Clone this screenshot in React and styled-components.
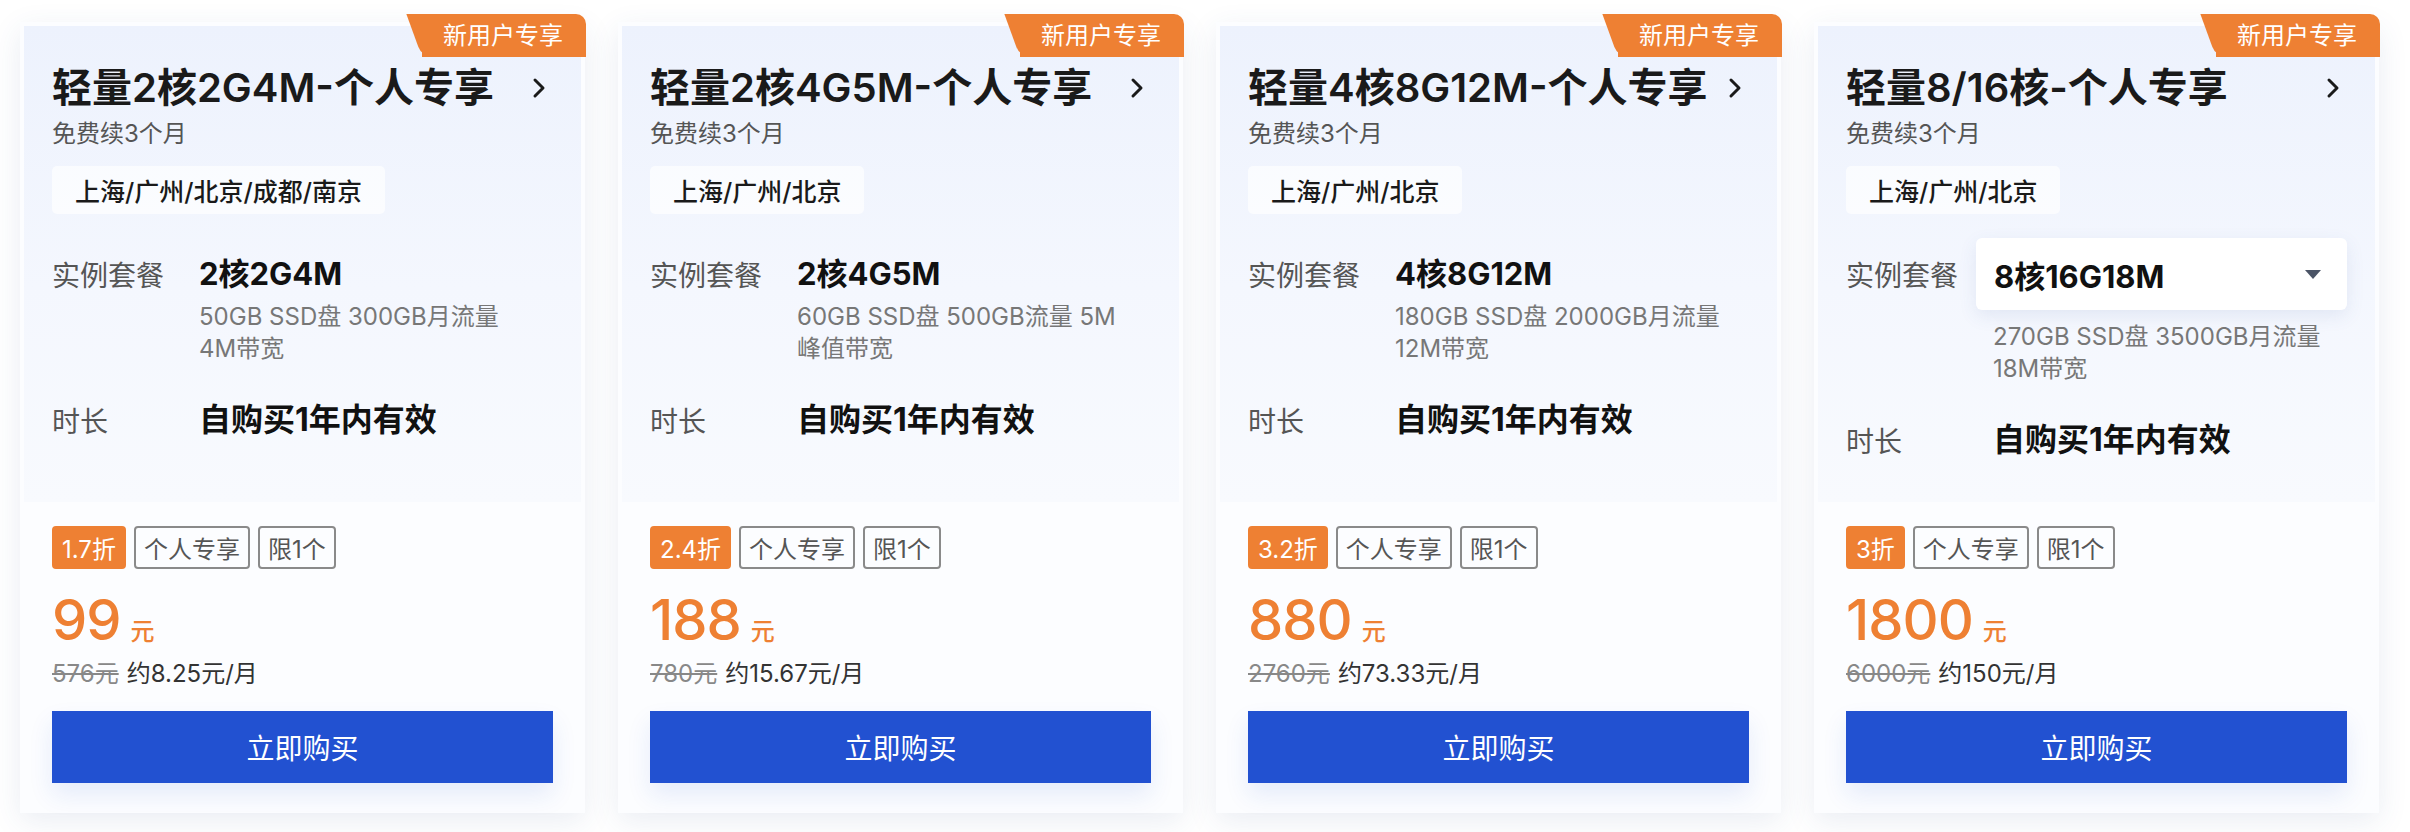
import React from "react";
import styled, { createGlobalStyle } from "styled-components";

const ORANGE = "#ee8033";
const BLUE = "#2251d1";
const FONT = `Inter, "Noto Sans CJK SC", "Noto Sans", sans-serif`;

const plans = [
  {
    title: "轻量2核2G4M-个人专享",
    region: "上海/广州/北京/成都/南京",
    spec: "2核2G4M",
    desc: ["50GB SSD盘 300GB月流量", "4M带宽"],
    discount: "1.7折",
    price: "99",
    original: "576元",
    monthly: "约8.25元/月",
  },
  {
    title: "轻量2核4G5M-个人专享",
    region: "上海/广州/北京",
    spec: "2核4G5M",
    desc: ["60GB SSD盘 500GB流量 5M", "峰值带宽"],
    discount: "2.4折",
    price: "188",
    original: "780元",
    monthly: "约15.67元/月",
  },
  {
    title: "轻量4核8G12M-个人专享",
    region: "上海/广州/北京",
    spec: "4核8G12M",
    desc: ["180GB SSD盘 2000GB月流量", "12M带宽"],
    discount: "3.2折",
    price: "880",
    original: "2760元",
    monthly: "约73.33元/月",
  },
  {
    title: "轻量8/16核-个人专享",
    region: "上海/广州/北京",
    spec: "8核16G18M",
    select: true,
    desc: ["270GB SSD盘 3500GB月流量", "18M带宽"],
    discount: "3折",
    price: "1800",
    original: "6000元",
    monthly: "约150元/月",
  },
];

function App() {
  return (
    <>
      <GlobalStyle />
      <S.Page>
        {plans.map((p) => (
          <S.Card key={p.title}>
            <S.Tag>新用户专享</S.Tag>
            <S.Upper>
              <S.TitleRow>
                <S.Title>{p.title}</S.Title>
                <svg width="20" height="22" viewBox="0 0 20 22">
                  <path d="M6 3 L14 11 L6 19" fill="none" stroke="#1a1a1a" strokeWidth="3" strokeLinecap="round" strokeLinejoin="round" />
                </svg>
              </S.TitleRow>
              <S.Sub>免费续3个月</S.Sub>
              <S.Region>{p.region}</S.Region>

              <S.Row $select={p.select}>
                <S.Label>实例套餐</S.Label>
                {p.select ? (
                  <S.Select>
                    <span>{p.spec}</span>
                    <svg width="16" height="9" viewBox="0 0 16 9">
                      <path d="M0 0 H16 L8 9 Z" fill="#4b5466" />
                    </svg>
                  </S.Select>
                ) : (
                  <S.Value>{p.spec}</S.Value>
                )}
              </S.Row>
              <S.Desc $select={p.select}>
                {p.desc.map((line) => (
                  <div key={line}>{line}</div>
                ))}
              </S.Desc>

              <S.Row $duration>
                <S.Label>时长</S.Label>
                <S.Value $wide>自购买1年内有效</S.Value>
              </S.Row>
            </S.Upper>

            <S.Lower>
              <S.Badges>
                <S.Badge $hot>{p.discount}</S.Badge>
                <S.Badge>个人专享</S.Badge>
                <S.Badge>限1个</S.Badge>
              </S.Badges>
              <S.PriceRow>
                <S.Price>{p.price}</S.Price>
                <S.Unit>元</S.Unit>
              </S.PriceRow>
              <S.Meta>
                <S.Original>{p.original}</S.Original>
                <span>{p.monthly}</span>
              </S.Meta>
              <S.Buy>立即购买</S.Buy>
            </S.Lower>
          </S.Card>
        ))}
      </S.Page>
    </>
  );
}

export default App;

const GlobalStyle = createGlobalStyle`
  * { box-sizing: border-box; }
  body {
    margin: 0;
    background: #ffffff;
    font-family: ${FONT};
  }
`;

const Page = styled.div`
  display: flex;
  gap: 33px;
  padding: 22px 0 0 20px;
  height: 832px;
`;

const Card = styled.div`
  position: relative;
  width: 565px;
  height: 791px;
  flex-shrink: 0;
  display: flex;
  flex-direction: column;
  padding: 4px 4px 0;
  background: #fcfdff;
  box-shadow: 0 8px 28px rgba(45, 75, 140, 0.1);
`;

const Tag = styled.div`
  position: absolute;
  top: -8px;
  right: -1px;
  z-index: 1;
  height: 43px;
  padding: 0 23px 0 21px;
  line-height: 43px;
  font-size: 24px;
  color: #fff;
  background: ${ORANGE};
  border-radius: 0 10px 0 0;

  &::before {
    content: "";
    position: absolute;
    left: 0;
    top: 0;
    bottom: 0;
    width: 30px;
    background: ${ORANGE};
    border-radius: 0 0 0 10px;
    transform: skewX(20deg);
    transform-origin: bottom left;
    z-index: -1;
  }
`;

const Upper = styled.div`
  flex: 1;
  padding: 32px 28px 0;
  background: linear-gradient(180deg, #edf2fd 0%, #f4f7fe 55%, #f8fafe 100%);
`;

const TitleRow = styled.div`
  display: flex;
  align-items: center;
  justify-content: space-between;
  padding-right: 4px;
`;

const Title = styled.div`
  font-size: 40px;
  line-height: 60px;
  font-weight: 600;
  color: #1a1a1a;
  white-space: nowrap;
`;

const Sub = styled.div`
  font-size: 24px;
  line-height: 32px;
  color: #555;
`;

const Region = styled.div`
  display: inline-flex;
  align-items: center;
  height: 48px;
  margin-top: 16px;
  padding: 0 23px;
  font-size: 25px;
  font-weight: 500;
  color: #1a1a1a;
  background: rgba(255, 255, 255, 0.65);
  border-radius: 5px;
`;

const Row = styled.div`
  display: flex;
  align-items: center;
  min-height: ${({ $select }) => ($select ? "72px" : "40px")};
  margin-top: ${({ $select, $duration }) =>
    $duration ? "35px" : $select ? "24px" : "40px"};
`;

const Label = styled.div`
  width: 130px;
  flex-shrink: 0;
  font-size: 28px;
  color: #555;
`;

const Value = styled.div`
  padding-left: 17px;
  font-size: ${({ $wide }) => ($wide ? "32px" : "31px")};
  line-height: 40px;
  font-weight: 700;
  color: #111;
  white-space: nowrap;
`;

const Select = styled.div`
  flex: 1;
  height: 72px;
  display: flex;
  align-items: center;
  justify-content: space-between;
  padding: 0 26px 0 18px;
  font-size: 31px;
  font-weight: 700;
  color: #111;
  background: #fff;
  border-radius: 6px;
  box-shadow: 0 6px 18px rgba(60, 90, 160, 0.1);
`;

const Desc = styled.div`
  margin-top: ${({ $select }) => ($select ? "11px" : "7px")};
  padding-left: 147px;
  font-size: 24px;
  line-height: 32px;
  color: #777;
  white-space: nowrap;
`;

const Lower = styled.div`
  height: 311px;
  padding: 24px 28px 0;
`;

const Badges = styled.div`
  display: flex;
  gap: 8px;
`;

const Badge = styled.span`
  height: 43px;
  padding: 0 8px;
  display: inline-flex;
  align-items: center;
  font-size: 24px;
  border-radius: 4px;
  color: ${({ $hot }) => ($hot ? "#fff" : "#555")};
  background: ${({ $hot }) => ($hot ? ORANGE : "transparent")};
  border: 2px solid ${({ $hot }) => ($hot ? ORANGE : "#8a8a8a")};
`;

const PriceRow = styled.div`
  display: flex;
  align-items: baseline;
  margin-top: 19px;
  color: ${ORANGE};
`;

const Price = styled.span`
  font-size: 56px;
  line-height: 64px;
  font-weight: 500;
  letter-spacing: -1px;
`;

const Unit = styled.span`
  margin-left: 10px;
  font-size: 24px;
  font-weight: 500;
`;

const Meta = styled.div`
  display: flex;
  gap: 8px;
  margin-top: 6px;
  font-size: 24px;
  line-height: 32px;
  color: #333;
`;

const Original = styled.span`
  color: #888;
  text-decoration: line-through;
`;

const Buy = styled.button`
  display: block;
  width: 100%;
  height: 72px;
  margin-top: 21px;
  border: 0;
  background: ${BLUE};
  color: #fff;
  font-family: ${FONT};
  font-size: 28px;
  box-shadow: 0 12px 24px rgba(34, 81, 209, 0.1);
`;

const S = {
  Page,
  Card,
  Tag,
  Upper,
  TitleRow,
  Title,
  Sub,
  Region,
  Row,
  Label,
  Value,
  Select,
  Desc,
  Lower,
  Badges,
  Badge,
  PriceRow,
  Price,
  Unit,
  Meta,
  Original,
  Buy,
};
